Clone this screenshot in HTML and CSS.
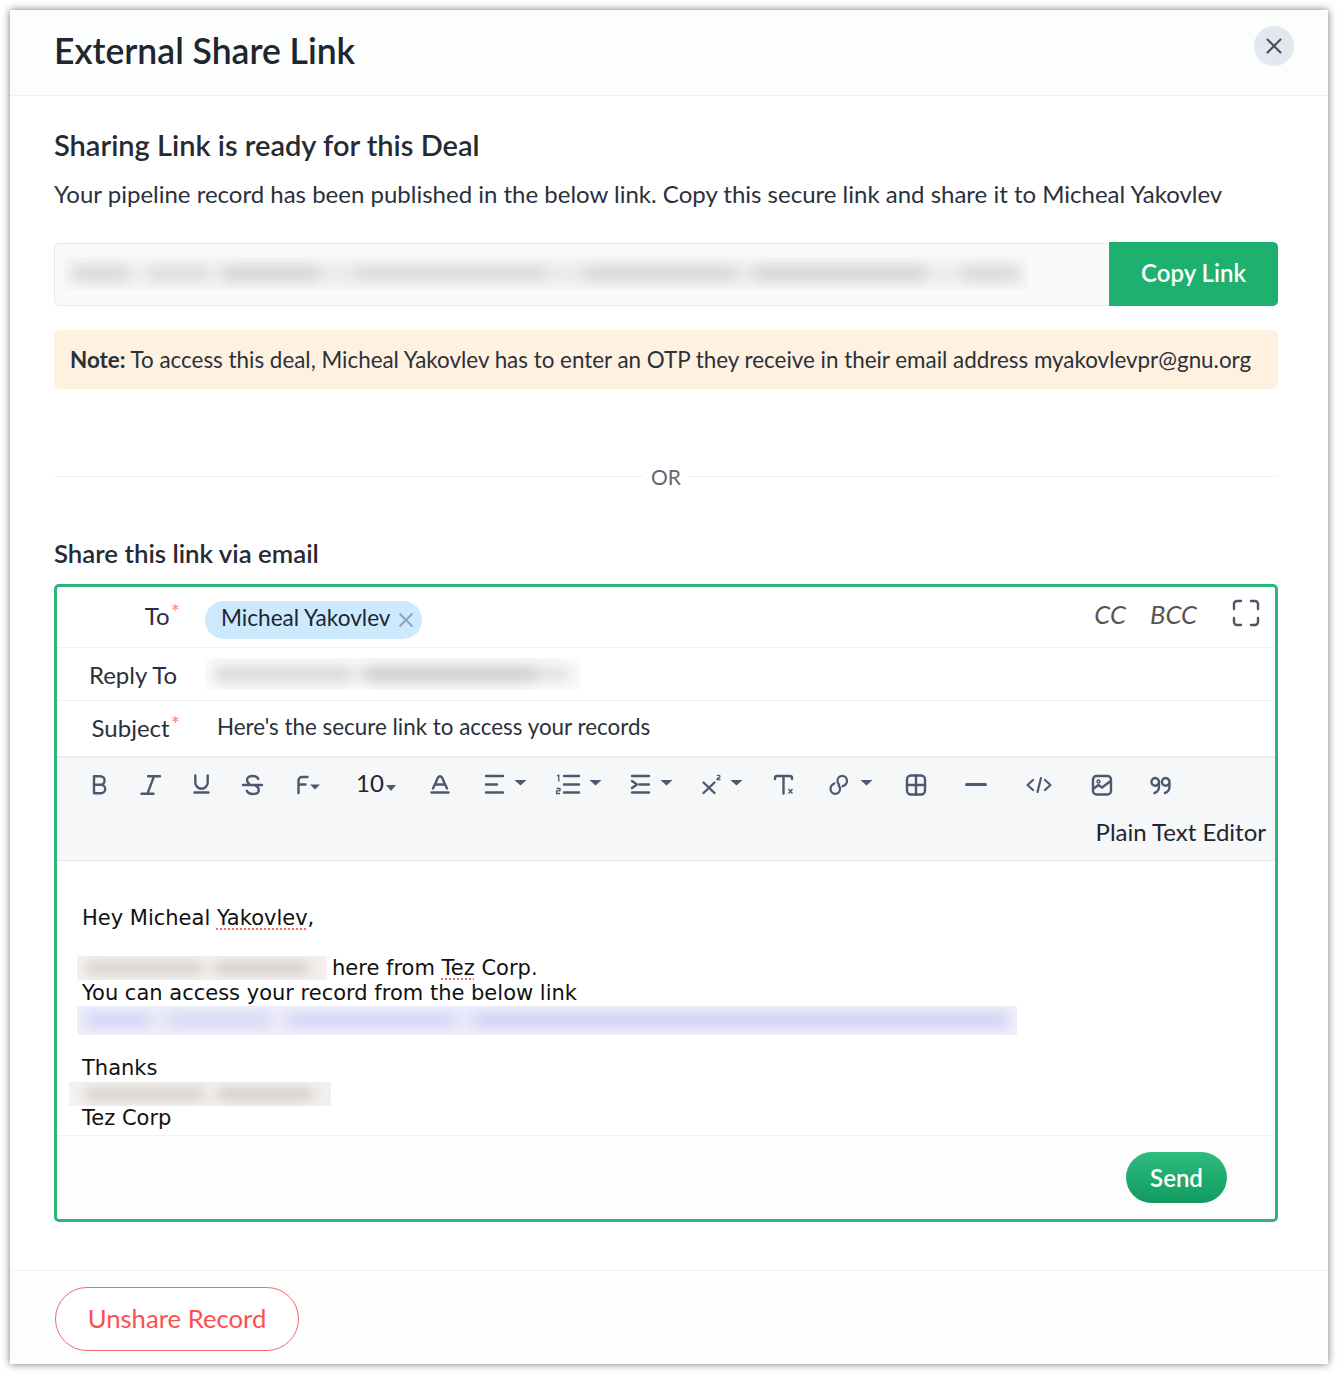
FILE: index.html
```html
<!DOCTYPE html>
<html lang="en">
<head>
<meta charset="utf-8">
<title>External Share Link</title>
<link rel="stylesheet" href="styles.css">
</head>
<body>
<div class="modal">
  <header class="modal-head">
    <h1 class="title">External Share Link</h1>
    <button class="close" aria-label="Close"><svg width="20" height="20" viewBox="0 0 20 20"><path d="M3.500 3.500l13 13M16.500 3.500l-13 13" stroke="#434d60" stroke-width="2" stroke-linecap="round" fill="none"/></svg></button>
  </header>
  <main class="modal-body">
    <h2 class="ready">Sharing Link is ready for this Deal</h2>
    <p class="desc">Your pipeline record has been published in the below link. Copy this secure link and share it to Micheal Yakovlev</p>
    <div class="link-row">
      <div class="link-field"><div class="strip strip-url"><div class="smear smear-url"></div></div></div>
      <button class="copy">Copy Link</button>
    </div>
    <div class="note"><b>Note:</b> To access this deal, Micheal Yakovlev has to enter an OTP they receive in their email address myakovlevpr@gnu.org</div>
    <div class="or"><span>OR</span></div>
    <h3 class="via">Share this link via email</h3>
    <section class="composer">
      <div class="row row-to">
        <div class="label">To<sup class="req">*</sup></div>
        <div class="chip">Micheal Yakovlev<svg class="chip-x" width="18" height="18" viewBox="0 0 18 18"><path d="M2.500 2.500l13 13M15.500 2.500l-13 13" stroke="#8fa2b5" stroke-width="1.800" fill="none"/></svg></div>
        <div class="row-right">
          <span class="cc">CC</span><span class="cc">BCC</span>
          <svg class="expand" width="28" height="28" viewBox="0 0 28 28"><path d="M2 10V5a3 3 0 0 1 3-3h4M19 2h4a3 3 0 0 1 3 3v5M26 19v4a3 3 0 0 1-3 3h-4M9 26H5a3 3 0 0 1-3-3v-4" stroke="#4a5568" stroke-width="2.400" fill="none" stroke-linecap="round"/></svg>
        </div>
      </div>
      <div class="row row-reply">
        <div class="label">Reply To</div>
        <div class="strip strip-reply"><div class="smear smear-reply"></div></div>
      </div>
      <div class="row row-subject">
        <div class="label">Subject<sup class="req">*</sup></div>
        <div class="subject">Here's the secure link to access your records</div>
      </div>
      <div class="toolbar">
        <div class="tools">
          <svg class="ic" width="24" height="24" viewBox="0 0 24 24"><path d="M8 3.200h6.300a4.300 4.300 0 0 1 0 8.600H8zM8 11.800h7a4.200 4.200 0 0 1 0 8.400H8z"/></svg>
          <svg class="ic" width="24" height="24" viewBox="0 0 24 24"><path d="M10 3.200h12M3.500 20.700h12M16 3.200L9.500 20.700"/></svg>
          <svg class="ic" width="24" height="24" viewBox="0 0 24 24"><path d="M5.300 2.500v7a6.200 6.200 0 0 0 12.400 0v-7M4.500 19.500h14"/></svg>
          <svg class="ic" width="24" height="24" viewBox="0 0 24 24"><path d="M17.300 6C16.300 3.800 14.300 3 11.700 3 8.500 3 6 4.500 6 7c0 1.600.8 2.700 2 3.500M14.800 13c2 .8 3 2.200 3 4 0 2.600-2.600 4-6 4-2.600 0-5-1-6-3.200M2 12h19"/></svg>
          <svg class="ic" width="30" height="24" viewBox="0 0 30 24"><path d="M6.500 20V7.500A3.500 3.500 0 0 1 10 4h5.500M6.500 11.500h7"/><polygon class="tri" points="18,11.500 28,11.500 23,16.500"/></svg>
          <div class="size-tool"><span class="size">10</span><i class="caret"></i></div>
          <svg class="ic" width="24" height="24" viewBox="0 0 24 24"><path d="M5 15.500L10 4.500q2-2.500 4 0l5 11M7 11.500h10M3.500 19.500h17"/></svg>
          <svg class="ic" width="48" height="24" viewBox="0 0 48 24"><path d="M4 3h17M4 11.500h11M4 19.500h17"/><polygon class="tri" points="32.500,7 44.500,7 38.500,12.500"/></svg>
          <svg class="ic" width="50" height="24" viewBox="0 0 50 24"><path d="M11 3h15M11 11.500h15M11 19.500h15"/><path class="thin" d="M4 3L5.800 2v6.500M3.500 15.500H7v2.300H3.500V20.500H7"/><polygon class="tri" points="36.500,7 48.500,7 42.500,12.500"/></svg>
          <svg class="ic" width="50" height="24" viewBox="0 0 50 24"><path d="M4 3h17M11.500 11.500H21M4 19.500h17M4 8l5 3.500-5 3.500"/><polygon class="tri" points="32.500,7 44.500,7 38.500,12.500"/></svg>
          <svg class="ic" width="48" height="24" viewBox="0 0 48 24"><path d="M4.500 9.500l11 10.500M15.500 9.500l-11 10.500"/><path class="thin" d="M18 3c.6-1 3-1 3 .4s-3 1.600-3 3.100h3.500"/><polygon class="tri" points="31.500,7 43.500,7 37.500,12.500"/></svg>
          <svg class="ic" width="26" height="24" viewBox="0 0 26 24"><path d="M4 6V4.800A2 2 0 0 1 6 3h13a2 2 0 0 1 2 1.800V6M12.500 3v17.500"/><path class="thin" d="M17.500 16l4 4.500M21.500 16l-4 4.500"/></svg>
          <svg class="ic ic-link" width="48" height="24" viewBox="0 0 48 24"><path d="M7.500 10.500C5 11.500 3.500 13.500 3.500 16c0 2.800 2.200 4.800 4.800 4.800S13 18.600 13 16c0-1.500-.6-2.800-1.500-3.800M15.500 13.300c2.700-1 4.500-3 4.500-5.600 0-2.800-2.200-4.900-4.800-4.900S10.500 5 10.500 7.700c0 1.500.6 2.800 1.500 3.800"/><polygon class="tri" points="33.500,7 45.500,7 39.500,12.500"/></svg>
          <svg class="ic" width="24" height="24" viewBox="0 0 24 24"><rect x="4" y="2.500" width="18" height="19" rx="4"/><path d="M13 2.500v19M4 12h18"/></svg>
          <svg class="ic ic-hr" width="26" height="24" viewBox="0 0 26 24"><path d="M4.500 11.500h19"/></svg>
          <svg class="ic ic-code" width="32" height="24" viewBox="0 0 32 24"><path d="M10 7l-5.500 5 5.500 5M22 7l5.500 5-5.500 5M18 5l-3.500 14"/></svg>
          <svg class="ic" width="24" height="24" viewBox="0 0 24 24"><rect x="4" y="3" width="18" height="18.500" rx="3.500"/><circle class="dot" cx="9.500" cy="8.500" r="1.500"/><path d="M4 16l5.500-4 3.500 2.500 8-6"/></svg>
          <svg class="ic" width="28" height="24" viewBox="0 0 28 24"><path d="M12 9a3.800 3.800 0 1 1-.1-1M12 8.500v5c0 3-1.500 5.500-4.500 6.500M22.500 9a3.800 3.800 0 1 1-.1-1M22.500 8.500v5c0 3-1.500 5.500-4.500 6.500"/></svg>
        </div>
        <div class="plain">Plain Text Editor</div>
      </div>
      <div class="mail">
        <div class="line">Hey Micheal <span class="spell">Yakovlev</span>,</div>
        <div class="line">&nbsp;</div>
        <div class="line"><span class="strip strip-name"><span class="smear smear-name"></span></span>here from <span class="spell">Tez</span> Corp.</div>
        <div class="line">You can access your record from the below link</div>
        <div class="line"><span class="strip strip-link"><span class="smear smear-link"></span></span></div>
        <div class="line">&nbsp;</div>
        <div class="line">Thanks</div>
        <div class="line"><span class="strip strip-sign"><span class="smear smear-name"></span></span></div>
        <div class="line">Tez Corp</div>
      </div>
      <div class="composer-foot"><button class="send">Send</button></div>
    </section>
  </main>
  <footer class="modal-foot"><button class="unshare">Unshare Record</button></footer>
</div>
</body>
</html>
```
FILE: styles.css
```css
* { box-sizing: border-box; }
html, body { margin: 0; padding: 0; background: #fff; }
body { padding: 10px; height: 1374px; font-family: Lato, "Liberation Sans", sans-serif; color: #262a33; overflow: hidden; }
button { font-family: inherit; cursor: pointer; }
h1, h2, h3, p { margin: 0; }

.modal { width: 1318px; height: 1354px; background: #fff; box-shadow: 0 0 8px rgba(0,0,0,.55); display: flex; flex-direction: column; }

.modal-head { height: 86px; flex: none; padding: 0 34px 0 44px; display: flex; align-items: center; justify-content: space-between; background: #fcfdfd; border-bottom: 1px solid #f0f3f4; }
.title { font-size: 35.5px; font-weight: 600; line-height: 1; color: #21252e; position: relative; top: -2px; }
.close { width: 40px; height: 40px; border: 0; border-radius: 50%; background: #e2e8ee; padding: 0; display: flex; align-items: center; justify-content: center; margin-bottom: 13px; }

.modal-body { flex: 1; padding: 0 50px 0 44px; }
.ready { font-size: 29px; font-weight: 600; line-height: 36px; margin-top: 31px; color: #262a33; }
.desc { font-size: 24px; line-height: 30px; margin-top: 16px; color: #2b303a; white-space: nowrap; }

.link-row { display: flex; margin-top: 33px; height: 64px; align-items: stretch; }
.link-field { flex: 1; margin-top: 1px; background: #f8fafc; border: 1px solid #e6ebf1; border-right: 0; border-radius: 5px 0 0 5px; padding: 13px 0 0 9px; }
.copy { width: 169px; border: 0; background: #1eb06e; color: #fff; font-size: 24px; font-weight: 600; border-radius: 0 5px 5px 0; padding: 0 0 3px; }

.note { margin-top: 24px; height: 59px; background: #fff1e0; border-radius: 6px; padding: 0 16px; font-size: 22.4px; line-height: 59px; white-space: nowrap; color: #2b303a; }
.note b { font-weight: 700; }

.or { margin-top: 72px; height: 30px; display: flex; justify-content: center; align-items: center; background: linear-gradient(90deg, #d5d8d9 50%, transparent 50%) center / 3px 1px repeat-x; }
.or span { background: #fff; padding: 0 8px; font-size: 21px; color: #636870; }

.via { margin-top: 45px; font-size: 25.8px; font-weight: 600; line-height: 34px; color: #262a33; }

.composer { margin-top: 14px; height: 638px; border: 3px solid #2db57b; border-radius: 5px; display: flex; flex-direction: column; }
.row { display: flex; align-items: center; flex: none; border-bottom: 1px solid #eef2f4; }
.row-to { height: 61px; }
.row-reply { height: 53px; }
.row-subject { height: 55px; border-bottom: 0; }
.label { width: 120px; flex: none; text-align: right; font-size: 24px; color: #2b303a; }
.req { color: #ff8585; font-size: 22px; line-height: 0; vertical-align: 5px; margin: 0 -3px 0 1px; }
.row-to .label { margin-top: -3px; }
.row-subject .label { margin-top: -2px; }
.chip { margin-left: 28px; height: 38px; width: 217px; margin-top: 5px; border-radius: 19px; background: #cde9fe; display: flex; align-items: center; padding: 0 0 4px 16px; font-size: 22.6px; color: #21252e; white-space: nowrap; }
.chip-x { margin-left: 6px; margin-top: 5px; flex: none; }
.row-right { margin-left: auto; display: flex; align-items: center; padding-right: 15px; margin-top: -6px; }
.cc { font-style: italic; font-size: 25.6px; color: #555; margin-right: 24px; }
.cc + .cc { margin-right: 35px; }
.expand { display: block; margin-top: -2px; }

.strip { display: block; overflow: hidden; }
.smear { display: block; }
.strip-url { width: 964px; height: 33px; background: #f6f7f8; padding-top: 9px; }
.smear-url { height: 15px; margin: 0 8px; filter: blur(7px); background: linear-gradient(90deg, #d4d5d8 0 6%, #eceded 6% 8%, #d8d9dc 8% 14%, #e6e7e8 14% 16%, #cfd0d3 16% 26%, #e6e7e8 26% 30%, #d6d7da 30% 50%, #e6e7e8 50% 54%, #d2d3d6 54% 70%, #e6e7e8 70% 72%, #cfd0d3 72% 90%, #e8e9ea 90% 94%, #d4d5d8 94% 100%); }
.strip-reply { margin-left: 28px; width: 375px; height: 32px; background: #fbfbfb; padding-top: 9px; }
.smear-reply { height: 14px; margin: 0 10px; filter: blur(7px); background: linear-gradient(90deg, #d2d2d2 0 38%, #ececec 38% 42%, #c6c6c6 42% 90%, #dedede 90% 100%); }
.subject { margin-left: 40px; font-size: 22.4px; color: #2b303a; white-space: nowrap; margin-top: -4px; }

.toolbar { height: 105px; flex: none; background: #f6f7f9; border-top: 2px solid #e9ecef; border-bottom: 1px solid #e4e7eb; display: flex; flex-direction: column; }
.tools { display: grid; grid-template-columns: 52px 52px 51px 51px 64px 72px 54px 71px 75px 71px 72px 56px 76px 59px 61px 66px 58px auto; margin-left: 29px; height: 54px; align-items: center; }
.ic { display: block; fill: none; stroke: #4c586f; stroke-width: 2.4; stroke-linecap: round; stroke-linejoin: round; }
.ic .tri { fill: #4c586f; stroke: none; }
.ic .thin { stroke-width: 1.3; stroke-linecap: butt; }
.ic .dot { stroke-width: 1.4; }
.ic-hr { stroke-width: 3; }
.ic-code { stroke-width: 2.2; }
.ic-link { stroke-width: 2.2; }
.size-tool { display: flex; align-items: center; }
.size { font-size: 24px; color: #21252e; line-height: 24px; margin-top: -4px; }
.caret { display: block; width: 0; height: 0; border: 5.5px solid transparent; border-top: 6px solid #4c586f; border-bottom: 0; margin: 5px 0 0 2px; }
.plain { text-align: right; padding-right: 9px; font-size: 24px; line-height: 30px; margin-top: 5px; color: #21252e; }

.mail { flex: none; height: 275px; padding: 45px 0 0 25px; font-family: "DejaVu Sans", Verdana, sans-serif; font-size: 21px; line-height: 25px; color: #111; border-bottom: 1px solid #eef2f4; background: #fff; }
.line { height: 25px; white-space: nowrap; }
.spell { text-decoration: underline dotted #f46a6a 2px; text-underline-offset: 3px; }
.strip-name { display: inline-block; vertical-align: middle; width: 250px; height: 24px; margin: -2px 5px 0 -5px; background: #f4f2f0; padding-top: 5px; }
.smear-name { height: 14px; margin: 0 8px; filter: blur(6px); background: linear-gradient(90deg, #d9d3cf 0 50%, #efecea 50% 56%, #d5cfcb 56% 95%, #ece9e7 95%); }
.strip-link { display: inline-block; vertical-align: middle; width: 940px; height: 29px; margin-left: -5px; background: #f0f0fb; padding-top: 7px; }
.smear-link { height: 14px; margin: 0 8px; filter: blur(7px); background: linear-gradient(90deg, #d0d0f4 0 7%, #e9e9f9 7% 9%, #d4d4f4 9% 20%, #e9e9f9 20% 22%, #d0d0f4 22% 40%, #e9e9f9 40% 42%, #cdcdf3 42% 100%); }
.strip-sign { display: inline-block; vertical-align: middle; width: 262px; height: 24px; margin: -1px 0 0 -13px; padding: 5px 0 0 8px; background: #f4f2f0; }

.composer-foot { flex: 1; display: flex; justify-content: flex-end; align-items: flex-start; padding: 16px 48px 0 0; background: #fcfdfd; border-radius: 0 0 3px 3px; }
.send { width: 101px; height: 51px; border: 0; border-radius: 26px; background: linear-gradient(#2fbc7e, #109a60); color: #fff; font-size: 24px; font-weight: 600; padding: 0; }

.modal-foot { height: 94px; flex: none; padding: 16px 0 0 45px; background: #fcfdfd; border-top: 1px solid #f0f3f4; border-bottom: 2px solid #fff; }
.unshare { width: 244px; height: 64px; border: 1px solid #f06a6a; border-radius: 32px; background: #fff; color: #fb5050; font-size: 25.7px; padding: 0 0 2px; }
```
